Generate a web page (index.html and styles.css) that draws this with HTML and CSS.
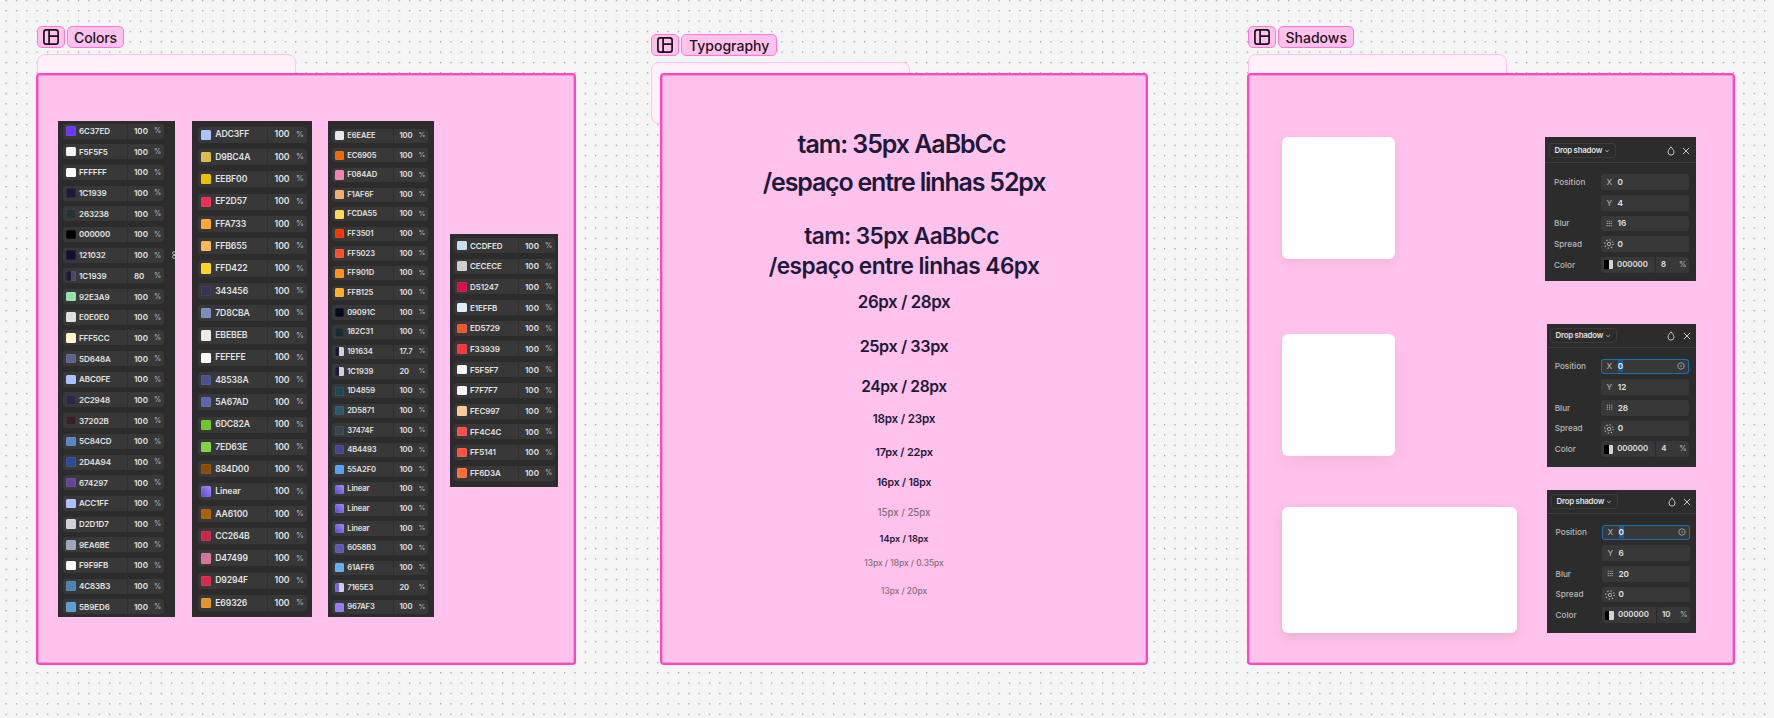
FILE: index.html
```
<!DOCTYPE html>
<html lang="en">
<head>
<meta charset="utf-8">
<title>Design board</title>
<link rel="stylesheet" href="styles.css">
</head>
<body>
<svg class="dots" width="1774" height="718" aria-hidden="true">
  <defs><pattern id="dot" x="5.5" y="-0.2" width="10.344" height="10.344" patternUnits="userSpaceOnUse"><rect width="1.25" height="1.25" fill="#989898"/></pattern></defs>
  <rect width="1774" height="718" fill="url(#dot)"/>
</svg>

<svg width="0" height="0" class="sprite" aria-hidden="true">
  <symbol id="i-board" viewBox="0 0 16 16"><g fill="none" stroke="#1a1016" stroke-width="1.7"><rect x=".9" y=".9" width="14.2" height="14.2" rx="2.4"/><path d="M6.1 1v14M6.1 7.2H15"/></g></symbol>
  <symbol id="i-drop" viewBox="0 0 8 10"><path d="M4 .8C5.2 2.4 7 4.2 7 6.1a3 3 0 0 1-6 0C1 4.200 2.800 2.400 4 .8Z" fill="none" stroke="#d4d4d4" stroke-width=".9"/></symbol>
  <symbol id="i-close" viewBox="0 0 8 8"><path d="M.9.9l6.200 6.200M7.100.9L.9 7.100" stroke="#dadada" stroke-width=".9" fill="none"/></symbol>
  <symbol id="i-chev" viewBox="0 0 6 4"><path d="M1.300 1.200L3 2.700l1.700-1.500" stroke="#bdbdbd" stroke-width=".9" fill="none"/></symbol>
  <symbol id="i-blur" viewBox="0 0 7 7"><path d="M.6 1.300h5.800M.6 3.500h5.800M.6 5.700h5.800" stroke="#a9a9a9" stroke-width=".9" stroke-dasharray="1.500 .5" fill="none"/></symbol>
  <symbol id="i-sun" viewBox="0 0 10 10"><circle cx="5" cy="5" r="1.700" fill="none" stroke="#b8b8b8" stroke-width=".9"/><circle cx="5" cy="5" r="4.200" fill="none" stroke="#b8b8b8" stroke-width="1.200" stroke-dasharray="1.200 2.100"/></symbol>
  <symbol id="i-hex" viewBox="0 0 8 8"><path d="M4 .6l3 1.700v3.400L4 7.400 1 5.700V2.300Z" fill="none" stroke="#b0b0b0" stroke-width=".8"/><circle cx="4" cy="4" r=".7" fill="#c0c0c0"/></symbol>
</svg>

<div class="tag tag-colors"><span class="chip icon"><svg><use href="#i-board"/></svg></span><span class="chip name">Colors</span></div>
<div class="ghost ghost-colors"></div>
<section class="frame frame-colors">
  <div class="palette" data-c="6C37ED F5F5F5 FFFFFF 1C1939 263238 000000 121032 1C1939:80 92E3A9 E0E0E0 FFF5CC 5D648A ABC0FE 2C2948 37202B 5C84CD 2D4A94 674297 ACC1FF D2D1D7 9EA6BE F9F9FB 4C83B3 5B9ED6"></div>
  <div class="palette p2" data-c="ADC3FF D9BC4A EEBF00 EF2D57 FFA733 FFB655 FFD422 343456 7D8CBA EBEBEB FEFEFE 48538A 5A67AD 6DC82A 7ED63E 884D00 Linear AA6100 CC264B D47499 D9294F E69326"></div>
  <div class="palette p3" data-c="E6EAEE EC6905 F084AD F1AF6F FCDA55 FF3501 FF5023 FF901D FFB125 09091C 182C31 191634:17.7 1C1939:20 1D4859 2D5871 37474F 4B4493 55A2F0 Linear Linear Linear 6058B3 61AFF6 7165E3:20 967AF3"></div>
  <div class="palette p4" data-c="CCDFED CECECE D51247 E1EFFB ED5729 F33939 F5F5F7 F7F7F7 FEC997 FF4C4C FF5141 FF6D3A"></div>
  <svg class="edge-mark" viewBox="0 0 3 8"><path d="M3 .7H1.600Q.6.7.6 2t1 1.500H3M3 4.500H1.600Q.6 4.500.6 5.900t1 1.400H3" fill="none" stroke="#c8c8c8" stroke-width=".9"/></svg>
</section>

<div class="tag tag-type"><span class="chip icon"><svg><use href="#i-board"/></svg></span><span class="chip name">Typography</span></div>
<div class="ghost ghost-type"></div>
<section class="frame frame-type">
  <p class="h1"><span class="a">tam: 35px AaBbCc</span><br><span class="b">/espaço entre linhas 52px</span></p>
  <p class="h2"><span class="a">tam: 35px AaBbCc</span><br><span class="b">/espaço entre linhas 46px</span></p>
  <p class="t t26">26px / 28px</p>
  <p class="t t25">25px / 33px</p>
  <p class="t t24">24px / 28px</p>
  <p class="t t18">18px / 23px</p>
  <p class="t t17">17px / 22px</p>
  <p class="t t16">16px / 18px</p>
  <p class="t t15 soft">15px / 25px</p>
  <p class="t t14">14px / 18px</p>
  <p class="t t13a soft">13px / 18px / 0.35px</p>
  <p class="t t13 soft">13px / 20px</p>
</section>

<div class="tag tag-shadows"><span class="chip icon"><svg><use href="#i-board"/></svg></span><span class="chip name">Shadows</span></div>
<div class="ghost ghost-shadows"></div>
<section class="frame frame-shadows">
  <div class="samples"><div class="card c1"></div><div class="card c2"></div><div class="card c3"></div></div>
  <div class="effects">
    <div class="fx fx1">
      <header><span class="select">Drop shadow<svg class="chev"><use href="#i-chev"/></svg></span><svg class="drop"><use href="#i-drop"/></svg><svg class="close"><use href="#i-close"/></svg></header>
      <div class="fields">
        <label>Position</label><div class="field"><i>X</i><b>0</b></div>
        <label></label><div class="field"><i>Y</i><b>4</b></div>
        <label>Blur</label><div class="field"><i><svg class="blur"><use href="#i-blur"/></svg></i><b>16</b></div>
        <label>Spread</label><div class="field"><i><svg class="sun"><use href="#i-sun"/></svg></i><b>0</b></div>
        <label>Color</label><div class="field color"><span class="bw"></span><b class="hex">000000</b><b class="pc">8</b><em>%</em></div>
      </div>
    </div>
    <div class="fx fx2">
      <header><span class="select">Drop shadow<svg class="chev"><use href="#i-chev"/></svg></span><svg class="drop"><use href="#i-drop"/></svg><svg class="close"><use href="#i-close"/></svg></header>
      <div class="fields">
        <label>Position</label><div class="field focus"><i>X</i><b><mark>0</mark></b><svg class="hexa"><use href="#i-hex"/></svg></div>
        <label></label><div class="field"><i>Y</i><b>12</b></div>
        <label>Blur</label><div class="field"><i><svg class="blur turned"><use href="#i-blur"/></svg></i><b>28</b></div>
        <label>Spread</label><div class="field"><i><svg class="sun"><use href="#i-sun"/></svg></i><b>0</b></div>
        <label>Color</label><div class="field color"><span class="bw"></span><b class="hex">000000</b><b class="pc">4</b><em>%</em></div>
      </div>
    </div>
    <div class="fx fx3">
      <header><span class="select">Drop shadow<svg class="chev"><use href="#i-chev"/></svg></span><svg class="drop"><use href="#i-drop"/></svg><svg class="close"><use href="#i-close"/></svg></header>
      <div class="fields">
        <label>Position</label><div class="field focus"><i>X</i><b><mark>0</mark></b><svg class="hexa"><use href="#i-hex"/></svg></div>
        <label></label><div class="field"><i>Y</i><b>6</b></div>
        <label>Blur</label><div class="field"><i><svg class="blur"><use href="#i-blur"/></svg></i><b>20</b></div>
        <label>Spread</label><div class="field"><i><svg class="sun"><use href="#i-sun"/></svg></i><b>0</b></div>
        <label>Color</label><div class="field color"><span class="bw"></span><b class="hex">000000</b><b class="pc">10</b><em>%</em></div>
      </div>
    </div>
  </div>
</section>
<script src="palette.js"></script>
</body>
</html>
```

FILE: styles.css
```
* { box-sizing: border-box; }
body { margin: 0; width: 1774px; height: 718px; overflow: hidden; position: relative; background: #f5f5f5; font-family: Inter, "Liberation Sans", sans-serif; }
p { margin: 0; }
.dots { position: absolute; left: 0; top: 0; }
.sprite { position: absolute; }

/* Section tags placed on the free canvas */
.tag { position: absolute; display: flex; gap: 2px; }
.tag-colors { left: 37px; top: 26px; }
.tag-type { left: 651px; top: 34px; }
.tag-shadows { left: 1248px; top: 26px; }
.chip { height: 22px; border: 1px solid #ff79d2; border-radius: 5px; background: #ffc2ec; display: flex; align-items: center; justify-content: center; font-size: 14px; font-weight: 500; color: #1f141b; }
.chip.icon { width: 28px; }
.chip.icon svg { width: 16px; height: 16px; }
.chip.name { padding: 0 6.500px; }
.tag-colors .name { padding: 0 6px; letter-spacing: -.1px; }
.tag-type .name { padding: 0 7px; }

.ghost { position: absolute; background: #fff0fa; border: 1px solid #ffc2ec; border-radius: 8px; height: 62px; width: 259px; }
.ghost-colors { left: 37px; top: 54px; }
.ghost-type { left: 651px; top: 62px; }
.ghost-shadows { left: 1248px; top: 54px; }

.frame { position: absolute; top: 73px; height: 592px; background: #ffc2ec; border: 2px solid #fb48bf; border-radius: 4px; box-shadow: inset 0 0 0 1px #ff93da; display: flex; }
.frame-colors { left: 36px; width: 540px; padding: 46px 0 0 20px; align-items: flex-start; }
.frame-type { left: 660px; width: 488px; flex-direction: column; align-items: center; text-align: center; padding-top: 50px; color: #1c1939; }
.frame-shadows { left: 1247px; width: 488px; padding: 62px 0 0 33px; justify-content: space-between; align-items: flex-start; }

/* Colour lists; --u scales every measure of one list */
.palette { --u: 1px; width: 117px; height: 496px; padding: 2.500px 0 0 5px; background: #2c2c2c; display: flex; flex-direction: column; gap: calc(5.700 * var(--u)); font-size: calc(8 * var(--u)); flex: none; overflow: hidden; }
.p2 { --u: 1.078px; width: 120px; margin-left: 17px; padding: 5.700px 0 0 6px; }
.p3 { --u: .9495px; width: 106px; margin-left: 16px; padding: 7.600px 0 0 4px; }
.p4 { width: 108px; height: 253px; margin: 113px 0 0 16px; padding: 4px 0 0 4px; }
.row { height: calc(15 * var(--u)); flex: none; width: calc(100.700 * var(--u)); display: grid; grid-template-columns: calc(13 * var(--u)) calc(52.300 * var(--u)) calc(25.700 * var(--u)) 1fr; align-items: center; background: #383838; border-radius: 3px; color: #e2e2e2; font-weight: 600; line-height: 1; }
.sw { width: calc(9.500 * var(--u)); height: calc(9.500 * var(--u)); margin-left: calc(3 * var(--u)); border-radius: 1.500px; box-shadow: inset 0 0 0 .5px rgba(255,255,255,.12); }
.code { padding-left: calc(3 * var(--u)); border-right: 1px solid #2f2f2f; height: 100%; display: flex; align-items: center; letter-spacing: -.01em; }
.num { padding-left: calc(5.700 * var(--u)); }
.unit { color: #a8a8a8; font-size: .9em; }
.edge-mark { position: absolute; left: 134px; top: 176px; width: 3px; height: 8px; }

/* Typography samples */
.h1, .h2 { font-weight: 600; }
.h1 { font-size: 25px; line-height: 38.400px; letter-spacing: -1.200px; }
.h2 { font-size: 22.700px; line-height: 30px; margin-top: 18.900px; letter-spacing: -.56px; }
.h1 .a { letter-spacing: -1.060px; padding-right: 5px; }
.h2 .a { letter-spacing: -.6px; padding-right: 5px; }
.t { line-height: 20px; font-weight: 600; }
.t26 { font-size: 16.900px; margin-top: 10.800px; letter-spacing: -.44px; }
.t25 { font-size: 16.200px; margin-top: 24.300px; letter-spacing: -.4px; }
.t24 { font-size: 15.600px; margin-top: 21.700px; letter-spacing: -.4px; }
.t18 { font-size: 11.700px; margin-top: 12px; letter-spacing: -.2px; }
.t17 { font-size: 11px; margin-top: 12.200px; letter-spacing: -.2px; }
.t16 { font-size: 10.400px; margin-top: 11.500px; letter-spacing: -.1px; }
.t15 { font-size: 9.700px; margin-top: 10px; }
.t14 { font-size: 9.100px; margin-top: 6.300px; }
.t13a { font-size: 8.400px; margin-top: 3.600px; }
.t13 { font-size: 8.400px; margin-top: 8px; }
.soft { color: #7d7078; font-weight: 500; }

/* Shadow samples */
.card { width: 112.500px; height: 122px; background: #fff; border-radius: 6px; }
.c1 { box-shadow: 0 3px 11px rgba(0,0,0,.08); }
.c2 { margin-top: 75px; box-shadow: 0 8px 19px rgba(0,0,0,.05), 0 1px 4px rgba(0,0,0,.02); }
.c3 { width: 234.700px; height: 126px; margin-top: 51px; box-shadow: 0 4px 13px rgba(0,0,0,.1); }

.effects { display: flex; flex-direction: column; align-items: flex-end; width: 151px; margin-right: 37px; }
.fx { background: #2c2c2c; color: #e2e2e2; font-size: 8.200px; font-weight: 500; line-height: 1; width: 149px; height: 143px; }
.fx1 { width: 151px; height: 144px; }
.fx2 { margin-top: 43px; }
.fx3 { margin-top: 23px; }
.fx header { display: flex; align-items: center; height: 24px; border-bottom: 1px solid #3c3c3c; padding: 0 5.500px 0 3px; }
.fx1 header { height: 26px; padding: 2px 6px 0 4px; }
.fx3 header { padding-left: 4px; padding-right: 5px; }
.select { display: flex; align-items: center; justify-content: space-between; width: 67px; height: 15.500px; border: 1px solid #3b3b3b; border-radius: 3px; padding: 0 5px 0 4.500px; font-size: 7.900px; letter-spacing: -.25px; margin-right: auto; font-weight: 600; white-space: nowrap; }
.chev { width: 6px; height: 4px; flex: none; }
.drop { width: 8px; height: 10px; margin-right: 7.500px; }
.close { width: 8px; height: 8px; }
.fields { display: grid; grid-template-columns: 46.500px 88px; row-gap: 5.200px; padding: 10.700px 0 0 7.700px; align-items: center; }
.fx1 .fields { grid-template-columns: 47px 88px; padding: 11.400px 0 0 9px; }
.fx3 .fields { padding-left: 8.500px; }
.fields label { color: #b8b8b8; font-size: 8.200px; }
.field { height: 15.500px; background: #383838; border-radius: 3px; display: flex; align-items: center; }
.field i { font-style: normal; color: #a9a9a9; width: 16.500px; display: flex; justify-content: center; flex: none; }
.field b { font-weight: 600; }
.focus { box-shadow: inset 0 0 0 1px #1672b4; }
mark { background: #1d5c90; color: #e6f2ff; padding: 1px 0; }
.hexa { width: 8px; height: 8px; margin-left: auto; margin-right: 4px; }
.blur { width: 7px; height: 7px; }
.turned { transform: rotate(90deg); }
.sun { width: 10px; height: 10px; }
.bw { width: 9px; height: 9px; margin-left: 3px; border-radius: 1px; background: linear-gradient(90deg, #000 50%, #d4d4d4 50%); flex: none; }
.field .hex { width: 43px; padding-left: 4px; height: 100%; border-right: 1px solid #2c2c2c; display: flex; align-items: center; font-size: 7.800px; }
.field .pc { width: 23px; padding-left: 5px; font-size: 7.800px; }
.field em { font-style: normal; color: #b0b0b0; font-size: 7.500px; }
```

FILE: palette.js
```
// Builds the rows of every colour list from its data-c attribute ("HEX" or "HEX:opacity").
document.querySelectorAll('.palette').forEach(function (list) {
  list.dataset.c.split(' ').forEach(function (item) {
    var parts = item.split(':');
    var code = parts[0];
    var alpha = parts[1] || '100';
    var fill = '#' + code;
    if (code === 'Linear') fill = 'linear-gradient(45deg, #5a48cf, #a58bf5)';
    else if (alpha === '80') fill = 'linear-gradient(90deg, #' + code + ' 50%, #4a4763 50%)';
    else if (alpha !== '100') fill = 'linear-gradient(90deg, #' + code + ' 50%, #d0d0dc 50%)';
    var row = document.createElement('div');
    row.className = 'row';
    row.innerHTML = '<span class="sw" style="background:' + fill + '"></span><span class="code">' + code +
      '</span><span class="num">' + alpha + '</span><span class="unit">%</span>';
    list.appendChild(row);
  });
});
```
